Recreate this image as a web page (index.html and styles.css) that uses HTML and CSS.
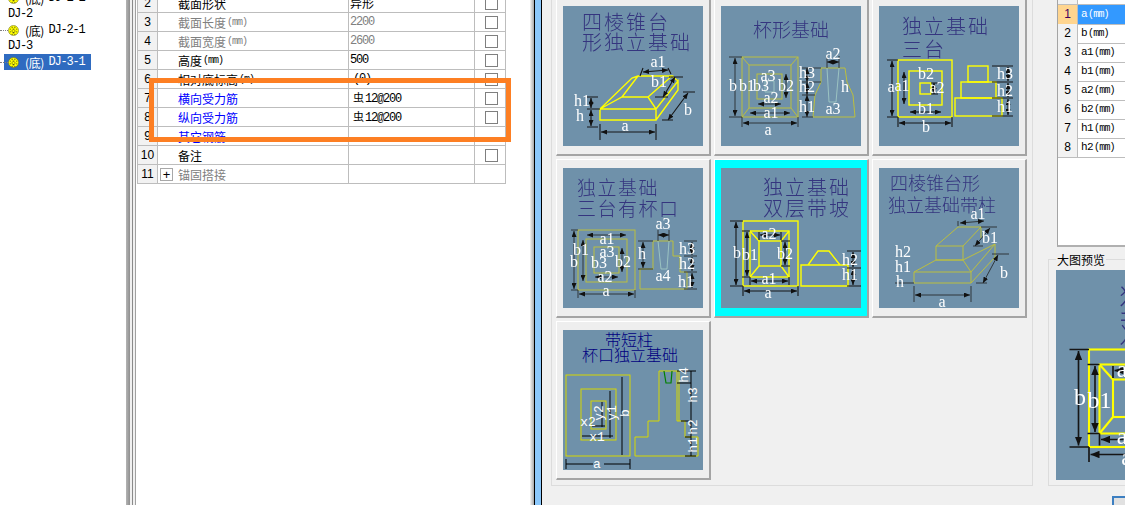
FILE: index.html
```html
<!DOCTYPE html>
<html lang="zh">
<head>
<meta charset="utf-8">
<title>独立基础</title>
<link rel="stylesheet" href="styles.css">
</head>
<body>
<svg class="defs" width="0" height="0" aria-hidden="true">
  <defs>
    <marker id="ar" markerUnits="userSpaceOnUse" markerWidth="6" markerHeight="5" refX="6" refY="2.5" orient="auto-start-reverse"><path class="ah" d="M0 0L6 2.5L0 5z"/></marker>
    <symbol id="gear" viewBox="0 0 12 12"><circle class="g1" cx="6" cy="6" r="5.5"/><path class="g2" d="M4 2h1v1H4zM7 2h1v1H7zM2 4h1v1H2zM5 4h2v1H5zM9 4h1v1H9zM4 6h1v1H4zM7 6h1v1H7zM2 7h1v1H2zM9 7h1v1H9zM5 8h2v1H5zM4 10h1v1H4zM7 10h1v1H7z"/></symbol>
    <symbol id="d5" viewBox="0 0 140 140">
      <rect class="bg" width="140" height="140"/>
      <text class="t t20" x="42" y="27">独立基础</text>
      <text class="t t20" x="42" y="48">双层带坡</text>
      <g class="ys">
        <rect x="22" y="53" width="55" height="65"/><rect x="29" y="63" width="39" height="46"/><rect x="38" y="73" width="22" height="25"/>
        <path d="M29 63L38 73M68 63L60 73M29 109L38 98M68 109L60 98"/>
        <path d="M80 97H127V118H80zM87 97L97 83H108L119 97"/>
      </g>
      <g class="k" marker-start="url(#ar)" marker-end="url(#ar)">
        <path d="M15 54V117"/><path d="M26 64V108"/><path d="M23 123H76"/><path d="M30 113H67"/><path d="M39 67H59"/><path d="M64 74V97"/><path d="M132 84V99"/><path d="M132 101V117"/>
      </g>
      <path class="k" d="M9 53H22M9 118H22M21 63H29M21 109H29M22 118V128M77 118V128M29 109V117M68 109V117M38 64V72M60 64V72M60 73H69M60 98H69M126 83H140M126 100H140M126 118H140"/>
      <text class="d" x="16" y="90">b</text><text class="d" x="29" y="92">b1</text><text class="d" x="48" y="71">a2</text><text class="d" x="64" y="91">b2</text><text class="d" x="48" y="116">a1</text><text class="d" x="47" y="130">a</text><text class="d" x="129" y="97">h2</text><text class="d" x="129" y="112">h1</text>
    </symbol>
  </defs>
</svg>
<div class="app">
  <nav class="tree">
    <div class="node leaf"><svg class="gear"><use href="#gear"/></svg><span class="cn">(底)</span><span class="mono">DJ-1-1</span></div>
    <div class="node root"><span class="mono">DJ-2</span></div>
    <div class="node leaf"><svg class="gear"><use href="#gear"/></svg><span class="cn">(底)</span><span class="mono">DJ-2-1</span></div>
    <div class="node root"><span class="mono">DJ-3</span></div>
    <div class="node leaf selected"><svg class="gear"><use href="#gear"/></svg><span class="cn">(底)</span><span class="mono">DJ-3-1</span></div>
  </nav>
  <div class="split"></div>
  <section class="props">
    <div class="row"><div class="num">2</div><div class="name">截面形状</div><div class="val cjk">异形</div><div class="chk"><i></i></div></div>
    <div class="row"><div class="num">3</div><div class="name gray">截面长度<span class="u">(mm)</span></div><div class="val gray">2200</div><div class="chk"><i></i></div></div>
    <div class="row"><div class="num">4</div><div class="name gray">截面宽度<span class="u">(mm)</span></div><div class="val gray">2600</div><div class="chk"><i></i></div></div>
    <div class="row"><div class="num">5</div><div class="name">高度<span class="u">(mm)</span></div><div class="val">500</div><div class="chk"><i></i></div></div>
    <div class="row"><div class="num">6</div><div class="name">相对底标高<span class="u">(m)</span></div><div class="val pad">(0)</div><div class="chk"><i></i></div></div>
    <div class="row"><div class="num">7</div><div class="name blue">横向受力筋</div><div class="val"><span class="steel">虫</span>12@200</div><div class="chk"><i></i></div></div>
    <div class="row"><div class="num">8</div><div class="name blue">纵向受力筋</div><div class="val"><span class="steel">虫</span>12@200</div><div class="chk"><i></i></div></div>
    <div class="row"><div class="num">9</div><div class="name blue">其它钢筋</div><div class="val"></div><div class="chk"></div></div>
    <div class="row"><div class="num">10</div><div class="name">备注</div><div class="val"></div><div class="chk"><i></i></div></div>
    <div class="row"><div class="num">11</div><div class="name gray"><b class="plus">+</b>锚固搭接</div><div class="val"></div><div class="chk"></div></div>
  </section>
  <div class="shade"></div>
  <div class="bar"></div>
  <main class="content">
    <div class="group">
      <div class="card">
        <svg class="dg" viewBox="0 0 140 140">
          <rect class="bg" width="140" height="140"/>
          <text class="t t20" x="19" y="24">四棱锥台</text><text class="t t20" x="19" y="44">形独立基础</text>
          <g class="ys"><path d="M37 103H93V114H37zM37 103L59 91H85L93 103M59 91L75 70H109L85 91M37 103L69 72L75 70M93 103L115 75V84L93 114M109 70L115 75"/></g>
          <g class="k" marker-start="url(#ar)" marker-end="url(#ar)"><path d="M38 126H92"/><path d="M28 92V102"/><path d="M28 104V120"/><path d="M80 66L105 64"/><path d="M112 71L100 91"/><path d="M125 87L105 114"/></g>
          <path class="k" d="M37 118V134M93 118V134M24 91H35M24 103H37M24 121H35M120 86H132M99 114H110M77 70L80 62M105 62L108 68M106 71H120M92 91H105"/>
          <text class="d" x="62" y="125">a</text><text class="d" x="19" y="100">h1</text><text class="d" x="17" y="115">h</text><text class="d" x="95" y="61">a1</text><text class="d" x="96" y="81">b1</text><text class="d" x="125" y="109">b</text>
        </svg>
      </div>
      <div class="card">
        <svg class="dg" viewBox="0 0 140 140">
          <rect class="bg" width="140" height="140"/>
          <text class="t t19" x="32" y="31">杯形基础</text>
          <g class="ym"><rect x="21" y="51" width="56" height="60"/><rect x="28" y="59" width="42" height="43"/><rect x="36" y="68" width="25" height="25"/><path d="M21 51L28 59M77 51L70 59M21 111L28 102M77 111L70 102M100 62H124L126 76L132 89L134 111H92L94 89L100 76z"/></g>
          <path class="lt" d="M106 62L108 96H115L118 62M44 75H53V86H44z"/>
          <g class="k2" marker-start="url(#ar)" marker-end="url(#ar)"><path d="M14 52V110"/><path d="M22 117H76"/><path d="M29 107H69"/><path d="M37 98H60"/><path d="M86 62V76"/><path d="M86 76V89"/><path d="M86 89V111"/><path d="M106 56H118"/><path d="M65 68V92"/></g>
          <path class="k2" d="M8 51H21M8 111H21M21 111V121M77 111V121M81 62H100M81 76H100M81 89H94M81 111H92M106 50V62M118 50V62"/>
          <text class="d" x="12" y="85">b</text><text class="d" x="26" y="85">b1</text><text class="d" x="40" y="85">b3</text><text class="d" x="65" y="85">b2</text><text class="d" x="47" y="75">a3</text><text class="d" x="50" y="97">a2</text><text class="d" x="50" y="112">a1</text><text class="d" x="47" y="129">a</text><text class="d" x="112" y="53">a2</text><text class="d" x="86" y="72">h3</text><text class="d" x="86" y="86">h2</text><text class="d" x="86" y="106">h1</text><text class="d" x="112" y="108">a3</text><text class="d" x="124" y="86">h</text>
        </svg>
      </div>
      <div class="card">
        <svg class="dg" viewBox="0 0 140 140">
          <rect class="bg" width="140" height="140"/>
          <text class="t t20" x="23" y="28">独立基础</text><text class="t t20" x="23" y="51">三台</text>
          <g class="ys"><rect x="19" y="54" width="54" height="57"/><rect x="30" y="65" width="33" height="34"/><rect x="41" y="77" width="11" height="11"/><rect x="76" y="92" width="47" height="18"/><rect x="82" y="76" width="35" height="16"/><rect x="89" y="60" width="20" height="16"/></g>
          <g class="k" marker-start="url(#ar)" marker-end="url(#ar)"><path d="M13 55V110"/><path d="M25 66V98"/><path d="M20 117H72"/><path d="M31 106H62"/><path d="M129 61V75"/><path d="M129 77V91"/><path d="M129 93V109"/><path d="M55 77V88"/></g>
          <path class="k" d="M8 54H19M8 111H19M19 111V121M73 111V121M113 60H134M113 76H134M113 92H134M113 110H134M52 77H59M52 88H59"/>
          <text class="d" x="12" y="86">a</text><text class="d" x="23" y="85">a1</text><text class="d" x="47" y="73">b2</text><text class="d" x="58" y="87">a2</text><text class="d" x="47" y="108">b1</text><text class="d" x="47" y="126">b</text><text class="d" x="126" y="73">h3</text><text class="d" x="126" y="90">h2</text><text class="d" x="126" y="106">h1</text>
        </svg>
      </div>
      <div class="card">
        <svg class="dg" viewBox="0 0 140 140">
          <rect class="bg" width="140" height="140"/>
          <text class="t t19b" x="14" y="27">独立基础</text><text class="t t19b" x="14" y="48">三台有杯口</text>
          <g class="ym"><rect x="15" y="62" width="57" height="60"/><rect x="23" y="71" width="41" height="43"/><rect x="31" y="79" width="25" height="26"/><path d="M77 121V101H90V73H110V88H117V104H124V121z"/></g>
          <path class="lt" d="M95 73L98 101H104L106 73"/>
          <g class="k2" marker-start="url(#ar)" marker-end="url(#ar)"><path d="M11 63V121"/><path d="M20 72V113"/><path d="M16 126H71"/><path d="M24 67H63"/><path d="M32 109H55"/><path d="M59 80V104"/><path d="M95 67H106"/><path d="M80 74V100"/><path d="M129 74V87"/><path d="M129 89V103"/><path d="M129 105V120"/></g>
          <path class="k2" d="M8 62H15M8 122H15M15 122V130M72 122V130M75 73H90M75 101H90M121 73H134M121 88H134M121 104H134M121 121H134M95 62V73M106 62V73"/>
          <text class="d" x="11" y="99">b</text><text class="d" x="18" y="87">b1</text><text class="d" x="44" y="76">a1</text><text class="d" x="44" y="89">a3</text><text class="d" x="36" y="100">b3</text><text class="d" x="60" y="99">b2</text><text class="d" x="42" y="114">a2</text><text class="d" x="43" y="128">a</text><text class="d" x="100" y="61">a3</text><text class="d" x="79" y="91">h</text><text class="d" x="100" y="113">a4</text><text class="d" x="124" y="86">h3</text><text class="d" x="124" y="101">h2</text><text class="d" x="123" y="119">h1</text>
        </svg>
      </div>
      <div class="card active">
        <svg class="dg"><use href="#d5"/></svg>
      </div>
      <div class="card">
        <svg class="dg" viewBox="0 0 140 140">
          <rect class="bg" width="140" height="140"/>
          <text class="t t18" x="11" y="22">四棱锥台形</text><text class="t t18" x="9" y="44">独立基础带柱</text>
          <g class="ym"><path d="M35 104H92V115H35zM35 104L57 92H84L92 104M92 104L116 76V89L92 115M84 92L116 76M57 78H84V92H57zM57 78L79 59H102L84 78M102 59V70"/></g>
          <g class="k2" marker-start="url(#ar)" marker-end="url(#ar)"><path d="M36 127H91"/><path d="M81 55L105 53"/><path d="M119 87L104 115"/><path d="M111 60L96 78"/></g>
          <path class="k2" d="M35 118V134M92 118V134M113 86H130M97 115H108M102 59H118M94 78H104M16 115H35M79 58V53"/>
          <text class="d" x="99" y="51">a1</text><text class="d" x="111" y="75">b1</text><text class="d" x="125" y="110">b</text><text class="d" x="24" y="89">h2</text><text class="d" x="24" y="104">h1</text><text class="d" x="21" y="119">h</text><text class="d" x="63" y="139">a</text>
        </svg>
      </div>
      <div class="card">
        <svg class="dg" viewBox="0 0 140 140">
          <rect class="bg" width="140" height="140"/>
          <text class="t t16" x="42" y="16">带短柱</text><text class="t t16" x="19" y="31">杯口独立基础</text>
          <g class="yc"><rect x="3" y="45" width="64" height="81"/><rect x="18" y="59" width="35" height="51"/><rect x="28" y="71" width="15" height="28"/><path d="M72 126V107H85V91H96V41H114V91H122V107H135V126zM114 41H116V91"/></g>
          <path class="gr" d="M101 41L103 53H108L109 41"/>
          <path class="k1" d="M3 129V139M67 129V139M3 134H30M41 134H67M59 47V125M47 61V108M39 72V97M29 96H42M19 106H50M128 41V126M114 41H133M114 53H128M118 91H128M122 107H128M122 126H133"/>
          <text class="m" x="34" y="138">a</text><text class="m" x="25" y="96">x2</text><text class="m" x="34" y="111">x1</text>
          <text class="m" transform="rotate(-90 62 83)" x="62" y="87">b</text><text class="m" transform="rotate(-90 49 83)" x="49" y="87">y1</text><text class="m" transform="rotate(-90 36 83)" x="36" y="87">y2</text><text class="m" transform="rotate(-90 121 45)" x="121" y="49">h4</text><text class="m" transform="rotate(-90 130 65)" x="130" y="69">h3</text><text class="m" transform="rotate(-90 130 97)" x="130" y="101">h2</text><text class="m" transform="rotate(-90 130 115)" x="130" y="119">h1</text>
        </svg>
      </div>
    </div>
    <aside class="side">
      <div class="params">
        <div class="p-head"><span></span><span></span></div>
        <div class="p-row on"><span>1</span><span>a<em>(mm)</em></span></div>
        <div class="p-row"><span>2</span><span>b<em>(mm)</em></span></div>
        <div class="p-row"><span>3</span><span>a1<em>(mm)</em></span></div>
        <div class="p-row"><span>4</span><span>b1<em>(mm)</em></span></div>
        <div class="p-row"><span>5</span><span>a2<em>(mm)</em></span></div>
        <div class="p-row"><span>6</span><span>b2<em>(mm)</em></span></div>
        <div class="p-row"><span>7</span><span>h1<em>(mm)</em></span></div>
        <div class="p-row"><span>8</span><span>h2<em>(mm)</em></span></div>
      </div>
      <div class="preview">
        <div class="legend">大图预览</div>
        <svg class="big"><use href="#d5"/></svg>
      </div>
      <div class="btn"></div>
    </aside>
  </main>
  <div class="mark"></div>
</div>
</body>
</html>
```
FILE: styles.css
```css
* { box-sizing: border-box; }
html, body { margin: 0; padding: 0; background: #fff; }
body { width: 1125px; height: 505px; overflow: hidden; }
.defs { position: absolute; }
.app {
  position: relative; display: flex; width: 1125px; height: 505px; overflow: hidden;
  font: 12px "Noto Sans CJK SC", sans-serif; color: #000; background: #fff;
}

/* tree */
.tree { flex: 0 0 126px; margin-top: -10px; padding-left: 4px; }
.node { position: relative; display: flex; align-items: center; width: 87px; height: 16px; padding-left: 4px; white-space: nowrap; }
.leaf::before { content: ""; position: absolute; left: -4px; top: 8px; width: 8px; border-top: 1px dotted #808080; }
.node .gear { flex: 0 0 11px; width: 11px; height: 11px; margin-right: 6px; }
.selected { background: #2f6bc0; color: #fff; }
.cn { font-size: 12px; letter-spacing: -.4px; margin-right: -.4px; width: 24px; }
.mono { font: 12px "Liberation Mono", monospace; letter-spacing: -1.2px; }
.g1 { fill: #ffff00; stroke: #6a6a20; stroke-width: .6; }
.g2 { fill: #222; }

/* splitter */
.split {
  flex: 0 0 10px;
  background: linear-gradient(90deg, #b4b4b4 0, #8f8f8f 4px, #f0f0f0 4px, #f0f0f0 6px, #8a8a8a 6px, #8a8a8a 7px, #f0f0f0 7px, #f0f0f0 9px, #a0a0a0 9px);
}

/* property grid */
.props { flex: 0 0 394px; margin-top: -6px; padding-left: 1px; }
.row { display: grid; grid-template-columns: 21px 191px 126px 31px; height: 19px; width: 369px; line-height: 18px; }
.row > div { border-right: 1px solid #bdbdbd; border-bottom: 1px solid #bdbdbd; white-space: nowrap; overflow: hidden; }
.row .num { border-left: 1px solid #bdbdbd; background: #f2f2f2; text-align: center; font: 12px/18px "Liberation Sans", sans-serif; }
.row .name { display: flex; align-items: center; padding: 1px 0 0 20px; }
.row .val { padding-left: 1px; font: 12px/18px "Liberation Mono", monospace; letter-spacing: -1.2px; }
.row .val.cjk { font: 12px/18px "Noto Sans CJK SC", sans-serif; letter-spacing: 0; }
.row .val.pad { padding-left: 4px; }
.row .chk { display: flex; align-items: center; justify-content: center; padding-left: 2px; }
.chk i { display: block; width: 13px; height: 13px; border: 1px solid #7f7f7f; background: #fff; }
.gray { color: #808080; }
.blue { color: #0000ff; }
.u { font: 10px "Liberation Mono", monospace; margin-left: 1px; letter-spacing: -1px; }
.steel { font: 11px "Noto Sans CJK SC", sans-serif; letter-spacing: 0; margin: 0 1px 0 3px; }
.plus { display: flex; align-items: center; justify-content: center; flex: 0 0 13px; width: 13px; height: 13px; margin: 0 5px 0 -18px; border: 1px solid #a8a8a8; color: #000; font: 13px/11px "Liberation Sans", sans-serif; }

/* divider bar */
.shade { flex: 0 0 4px; background: linear-gradient(90deg, #f4f4f4, #a8a8a8); }
.bar { flex: 0 0 8px; background: #8cc8fb; border-left: 1px solid #000; border-right: 1px solid #000; }

/* right area */
.content { flex: 0 0 583px; display: flex; height: 505px; padding-left: 9px; background: #f0f0f0; overflow: hidden; }
.group {
  flex: 0 0 482px; height: 496px; margin-top: -10px; padding: 7px 0 0 4px;
  display: grid; grid-template-columns: repeat(3, 155px); grid-auto-rows: 159px; gap: 3px;
  align-content: start; border: 1px solid #dcdcdc; border-top: 0;
}
.card {
  padding: 8px 0 0 6px; background: #eeeeee;
  border-top: 1px solid #fff; border-left: 1px solid #fff;
  border-right: 2px solid #a4a4a4; border-bottom: 2px solid #a4a4a4;
}
.card.active { background: #00ffff; }
.dg { display: block; width: 140px; height: 140px; filter: blur(.3px); }
.card:last-child .dg { filter: none; }

.bg { fill: #6f91aa; }
.t { font-family: "Noto Sans CJK SC", sans-serif; font-weight: 300; fill: #35357f; }
.t20 { font-size: 20px; letter-spacing: 2px; }
.t19 { font-size: 19px; }
.t19b { font-size: 19px; letter-spacing: 1.5px; }
.t18 { font-size: 18px; }
.t16 { font-size: 16px; fill: #000080; }
.d { font: 16px "Liberation Serif", serif; fill: #fff; text-anchor: middle; }
.m { font: 13px "Liberation Mono", monospace; fill: #fff; text-anchor: middle; }
.ys, .ym, .yc, .lt, .gr, .k, .k1, .k2 { fill: none; }
.ys path, .ys rect { stroke: #ffff00; stroke-width: 1.4; }
.ym path, .ym rect { stroke: #bcbf3e; stroke-width: 1; }
.yc path, .yc rect { stroke: #d8d800; stroke-width: 1; }
.lt { stroke: #a6cfc8; stroke-width: .8; }
.gr { stroke: #008000; stroke-width: 1.2; }
.k { stroke: #161616; stroke-width: 1.1; }
.k1 { stroke: #000; stroke-width: 1; }
.k2 { stroke: #202020; stroke-width: .8; }
.ah { fill: #111; }

/* side panel */
.side { flex: 1 1 auto; display: flex; flex-direction: column; margin-left: 15px; min-width: 0; overflow: hidden; }
.params { width: 68px; height: 247px; margin-left: 9px; flex: none; background: #fff; border-left: 1px solid #a4a4a4; border-bottom: 2px solid #b0b0b0; }
.p-head, .p-row { display: grid; grid-template-columns: 20px 1fr; }
.p-head { height: 5px; border-bottom: 1px solid #bdbdbd; }
.p-head span:first-child { border-right: 1px solid #bdbdbd; background: #f2f2f2; }
.p-row { height: 19px; }
.p-row span { border-bottom: 1px solid #bdbdbd; white-space: nowrap; font: 11px/18px "Liberation Mono", monospace; }
.p-row span:first-child { border-right: 1px solid #bdbdbd; background: #f2f2f2; text-align: center; font: 12px/18px "Liberation Sans", sans-serif; }
.p-row span:last-child { padding-left: 3px; letter-spacing: -.6px; }
.p-row em { font-style: normal; font-size: 10px; margin-left: 1px; letter-spacing: -.8px; }
.p-row.on span:first-child { background: #ffd58f; color: #400060; }
.p-row.on span:last-child { background: #3399ff; color: #fff; }

.preview { flex: none; height: 227px; margin-top: 12px; padding: 0 0 0 7px; border: 1px solid #dcdcdc; border-right: 0; }
.legend { width: fit-content; height: 17px; margin: -9px 0 2px 0; padding: 0 1px; background: #f0f0f0; font-size: 12px; line-height: 17px; }
.big { display: block; width: 210px; height: 210px; filter: blur(.3px); }
.btn { flex: none; width: 60px; height: 20px; margin: 10px 0 0 64px; background: #e1e1e1; border: 2px solid #3d7fc1; }

/* annotation */
.mark { position: absolute; left: 149px; top: 78px; width: 362px; height: 64px; border: 5px solid #fd7f23; }
```
